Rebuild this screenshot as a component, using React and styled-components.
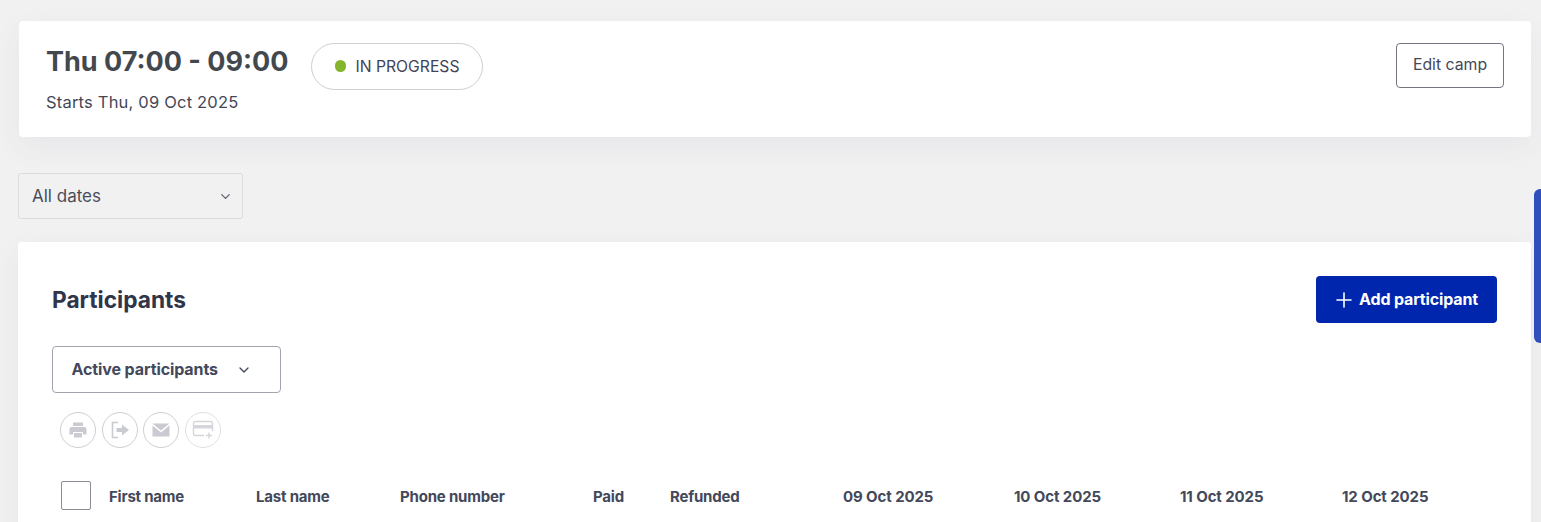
import React from "react";
import styled, { createGlobalStyle } from "styled-components";
import { ChevronDown, Plus } from "lucide-react";

const Global = createGlobalStyle`
  html, body { margin: 0; padding: 0; height: 100%; overflow: hidden; background: #f1f1f2; }
  body { font-family: Inter, "Liberation Sans", sans-serif; color: #33384a; }
  * { box-sizing: border-box; }
`;

const Page = styled.div`
  width: 1541px;
  height: 522px;
  overflow: hidden;
  padding: 21px 10px 0 18px;
  position: relative;
  background: #f1f1f2;
`;

const Card = styled.section`
  background: #fff;
  border-radius: 4px;
  box-shadow: 0 10px 30px rgba(60, 60, 80, 0.06);
`;

const HeaderCard = styled(Card)`
  height: 116px;
  margin-left: 1px;
  padding: 22px 27px 0 27px;
  display: flex;
  align-items: flex-start;
`;

const TitleBlock = styled.div`
  display: flex;
  flex-direction: column;
`;

const Title = styled.h1`
  margin: 1px 0 0;
  font-size: 27px;
  line-height: 36px;
  font-weight: 700;
  color: #43484f;
`;

const Subtitle = styled.div`
  margin-top: 12px;
  font-size: 16.5px;
  line-height: 20px;
  letter-spacing: 0.2px;
  color: #444856;
`;

const StatusPill = styled.div`
  margin-left: 22px;
  width: 172px;
  height: 47px;
  border: 1px solid #cfcfd3;
  border-radius: 24px;
  display: flex;
  align-items: center;
  padding: 0 0 1px 23px;
  gap: 9.5px;
  font-size: 15.7px;
  color: #3f4356;
`;

const Dot = styled.span`
  width: 11.5px;
  height: 11.5px;
  border-radius: 50%;
  background: #84b52c;
`;

const EditButton = styled.button`
  margin-left: auto;
  width: 108px;
  height: 45px;
  padding: 0 0 2px;
  background: #fff;
  border: 1px solid #75757f;
  border-radius: 4px;
  font: 400 15.8px Inter, sans-serif;
  color: #444856;
`;

const DateSelect = styled.div`
  margin-top: 36px;
  width: 225px;
  height: 46px;
  border: 1px solid #dcdcdf;
  border-radius: 3px;
  background: #f1f1f2;
  display: flex;
  align-items: center;
  justify-content: space-between;
  padding: 0 9px 0 13px;
  font-size: 17px;
  color: #4a4d58;
  svg { color: #5d6170; }
`;

const ParticipantsCard = styled(Card)`
  margin-top: 23px;
  height: 320px;
  padding: 34px 34px 0 34px;
`;

const HeadingRow = styled.div`
  display: flex;
  align-items: center;
  justify-content: space-between;
  height: 47px;
`;

const Heading = styled.h2`
  margin: 0;
  font-size: 22.7px;
  font-weight: 700;
  color: #30354a;
`;

const AddButton = styled.button`
  width: 181px;
  height: 47px;
  border: none;
  border-radius: 4px;
  padding: 0 3px 2px 0;
  background: #0026ad;
  color: #fff;
  font: 700 16px Inter, sans-serif;
  letter-spacing: -0.15px;
  display: flex;
  align-items: center;
  justify-content: center;
  gap: 3px;
  svg { margin-top: 2px; }
`;

const FilterButton = styled.div`
  margin-top: 23px;
  width: 229px;
  height: 47px;
  border: 1px solid #a3a3ae;
  border-radius: 4px;
  display: flex;
  align-items: center;
  padding: 0 0 2px 18.5px;
  gap: 18.5px;
  font-size: 16px;
  font-weight: 700;
  letter-spacing: -0.1px;
  color: #43485a;
  svg { margin-top: 2px; }
`;

const IconRow = styled.div`
  margin: 19px 0 0 8px;
  display: flex;
  gap: 5.67px;
`;

const RoundIcon = styled.div`
  width: 36px;
  height: 36px;
  border-radius: 50%;
  border: 1px solid ${p => (p.$faded ? "#e0e0e3" : "#cfcfd3")};
  display: flex;
  align-items: center;
  justify-content: center;
`;

const TableHead = styled.div`
  margin: 33px 0 0 9px;
  display: flex;
  align-items: center;
  height: 29px;
  position: relative;
`;

const Check = styled.div`
  width: 30px;
  height: 29px;
  border: 1px solid #8b8b96;
  border-radius: 2px;
  background: #fff;
  margin-right: 18px;
  flex: none;
`;

const Col = styled.div`
  width: ${p => p.$w}px;
  flex: none;
  margin-top: 2px;
  font-size: 15px;
  font-weight: 700;
  letter-spacing: -0.2px;
  color: #43485a;
  white-space: nowrap;
`;

const DateCol = styled(Col)`
  letter-spacing: -0.1px;
`;

const SideTab = styled.div`
  position: absolute;
  right: 0;
  top: 189px;
  width: 7px;
  height: 154px;
  background: #2f4fbc;
  border-radius: 6px 0 0 6px;
`;

const ICON = "#c9cad2";

const PrinterIcon = () => (
  <svg width="20" height="20" viewBox="0 0 20 20" fill={ICON}>
    <path d="M5 2.500h10v3.500H5z" />
    <path d="M3.500 7h13A2 2 0 0 1 18.500 9v5.500H15V12H5v2.500H1.500V9a2 2 0 0 1 2-2z" />
    <path d="M6 13h8v4.500H6z" />
  </svg>
);

const ExportIcon = () => (
  <svg width="22" height="22" viewBox="0 0 22 22" fill="none">
    <path d="M9 3.500H3.500v15H9" stroke={ICON} strokeWidth="1.600" />
    <path d="M7.500 9h5.500V5.500l7 5.500-7 5.500V13H7.500z" fill={ICON} />
  </svg>
);

const MailIcon = () => (
  <svg width="18" height="18" viewBox="0 0 18 18" fill={ICON}>
    <path d="M0.500 2.500h17L9 9.500z" />
    <path d="M0.500 4.500V15.500h17V4.500L9 11.500z" />
  </svg>
);

const CardAddIcon = () => (
  <svg width="24" height="22" viewBox="0 0 24 22" fill="none">
    <path d="M13 16.500H4.500a2 2 0 0 1-2-2V4.500a2 2 0 0 1 2-2h15a2 2 0 0 1 2 2V12" stroke="#d5d6dc" strokeWidth="1.400" />
    <path d="M2.500 6h19v3.500h-19z" fill="#d5d6dc" />
    <path d="M18 13.500v6M15 16.500h6" stroke="#d5d6dc" strokeWidth="1.400" />
  </svg>
);

export default function App() {
  return (
    <Page>
      <Global />
      <HeaderCard>
        <TitleBlock>
          <Title>Thu 07:00 - 09:00</Title>
          <Subtitle>Starts Thu, 09 Oct 2025</Subtitle>
        </TitleBlock>
        <StatusPill><Dot />IN PROGRESS</StatusPill>
        <EditButton>Edit camp</EditButton>
      </HeaderCard>
      <DateSelect>All dates<ChevronDown size={15} strokeWidth={2} /></DateSelect>
      <ParticipantsCard>
        <HeadingRow>
          <Heading>Participants</Heading>
          <AddButton><Plus size={24} strokeWidth={1.6} />Add participant</AddButton>
        </HeadingRow>
        <FilterButton>Active participants<ChevronDown size={16} strokeWidth={2} /></FilterButton>
        <IconRow>
          <RoundIcon><PrinterIcon /></RoundIcon>
          <RoundIcon><ExportIcon /></RoundIcon>
          <RoundIcon><MailIcon /></RoundIcon>
          <RoundIcon $faded><CardAddIcon /></RoundIcon>
        </IconRow>
        <TableHead>
          <Check />
          <Col $w={147}>First name</Col>
          <Col $w={144}>Last name</Col>
          <Col $w={193}>Phone number</Col>
          <Col $w={77}>Paid</Col>
          <Col $w={173}>Refunded</Col>
          <DateCol $w={171}>09 Oct 2025</DateCol>
          <DateCol $w={166}>10 Oct 2025</DateCol>
          <DateCol $w={162}>11 Oct 2025</DateCol>
          <DateCol $w={100}>12 Oct 2025</DateCol>
        </TableHead>
      </ParticipantsCard>
      <SideTab />
    </Page>
  );
}
